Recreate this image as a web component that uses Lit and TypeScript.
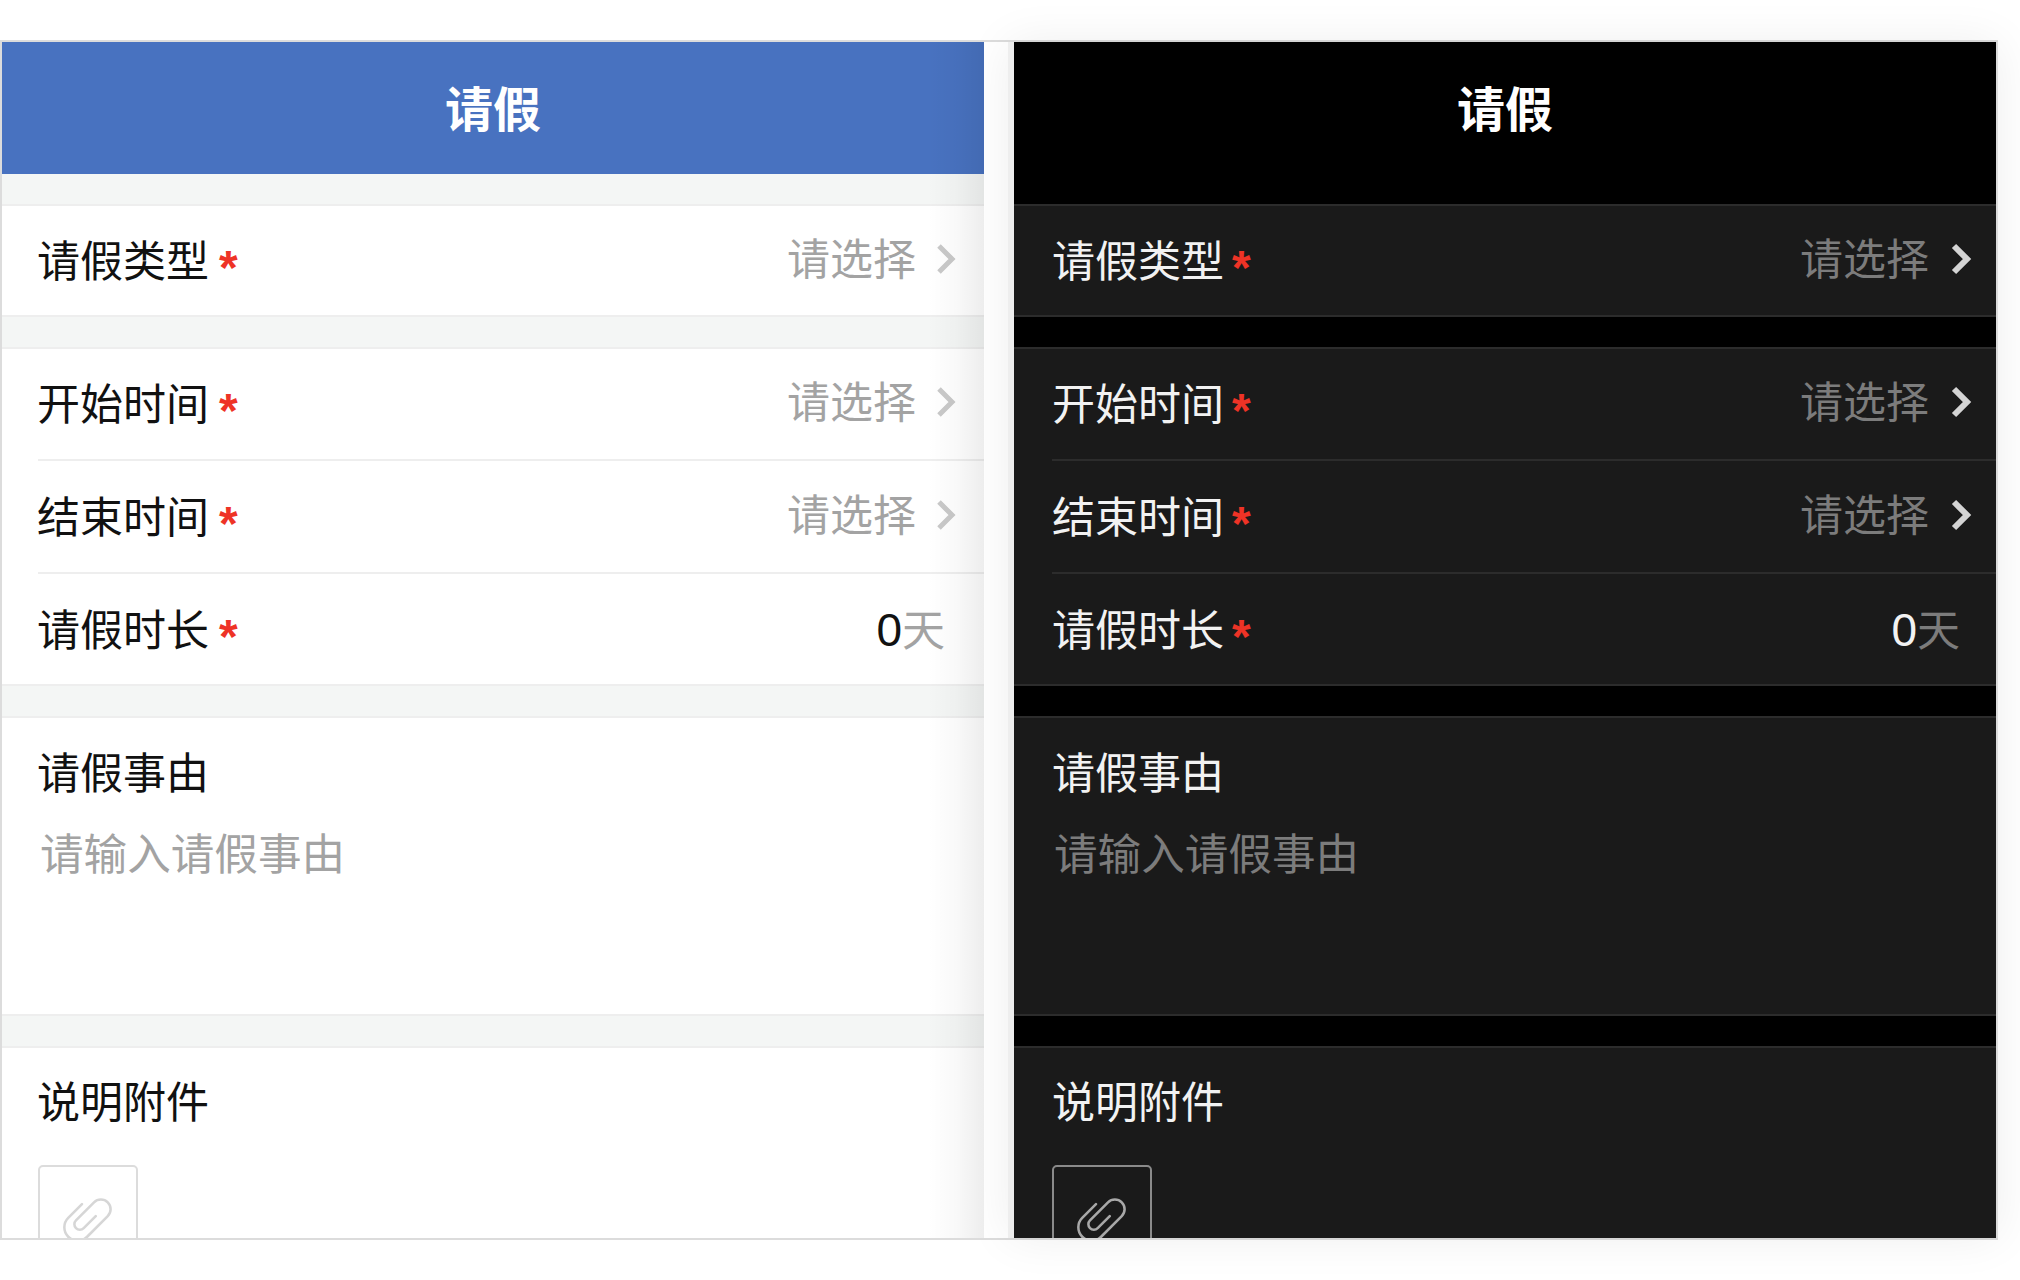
import {LitElement, html, css} from 'lit';
import {customElement, property} from 'lit/decorators.js';

const chevron = html`<svg class="chevron" width="22" height="34" viewBox="0 0 22 34"><path d="M4 4 L17 17 L4 30" fill="none" stroke="currentColor" stroke-width="var(--arrow-w)"/></svg>`;

const clip = html`<svg class="clip" width="68" height="68" viewBox="-28 -28 56 56"><path transform="rotate(-45)" d="M4 -11 L-12 -11 A11 11 0 0 0 -12 11 L12 11 A8 8 0 0 0 12 -5 L-9 -5 A4.5 4.5 0 0 0 -9 4 L5 4" fill="none" stroke="currentColor" stroke-width="2.1" stroke-linecap="round"/></svg>`;

@customElement('leave-form')
export class LeaveForm extends LitElement {
    @property({type: Boolean}) dark = false;

    static styles = css`
      :host {
        display: block;
        font-family: "Liberation Sans", "Noto Sans CJK SC", sans-serif;
      }

      .phone {
        position: relative;
        width: 982px;
        height: 1196px;
        overflow: hidden;
        background: #f4f6f5;
        --card: #fff;
        --line: #eeeeee;
        --text: #111;
        --muted: #a3a3a3;
        --arrow: #c9c9c9;
        --arrow-w: 5;
        --box: #dcdcdc;
        --clip: #d6d6d6;
        --zero: #111;
        --inset: 36px;
        --label-x: -1px;
        --pad-r: 31px;
        --arrow-gap: 19px;
        --star-gap: 10px;
      }

      .phone.dark {
        background: #000;
        --card: #1a1a1a;
        --line: #2c2c2c;
        --text: #f2f2f2;
        --muted: #7c7c7c;
        --arrow: #d4d4d4;
        --arrow-w: 6;
        --box: #8a8a8a;
        --clip: #a8a8a8;
        --zero: #f2f2f2;
        --inset: 38px;
        --label-x: 0px;
        --pad-r: 28px;
        --arrow-gap: 21px;
        --star-gap: 8px;
      }

      .header {
        height: 132px;
        padding-bottom: 5px;
        box-sizing: border-box;
        margin-bottom: 30px;
        background: #4872c0;
        color: #fff;
        font-size: 48px;
        font-weight: 700;
        display: flex;
        align-items: center;
        justify-content: center;
      }

      .dark .header {
        background: #000;
      }

      .section {
        background: var(--card);
        border-top: 2px solid var(--line);
        border-bottom: 2px solid var(--line);
        margin-bottom: 30px;
      }

      .row {
        height: 112px;
        margin-left: var(--inset);
        padding-right: var(--pad-r);
        padding-bottom: 6px;
        box-sizing: border-box;
        display: flex;
        align-items: center;
        font-size: 43px;
        color: var(--text);
        border-top: 2px solid var(--line);
      }

      .row:first-child {
        border-top: 0;
        height: 110px;
      }

      .row:nth-child(2) {
        height: 113px;
      }

      .row:nth-child(3) {
        padding-bottom: 4px;
      }

      .single .row:first-child {
        height: 109px;
      }

      .label {
        margin-left: var(--label-x);
      }

      .star {
        margin-left: var(--star-gap);
        color: #ee3326;
        font-size: 48px;
        font-weight: 700;
        line-height: 1;
        height: 28px;
      }

      .value {
        margin-left: auto;
        position: relative;
        top: -2px;
        color: var(--muted);
      }

      .chevron {
        margin-left: var(--arrow-gap);
        margin-right: -4px;
        margin-top: 2px;
        color: var(--arrow);
        display: block;
      }

      .days {
        margin-left: auto;
        margin-right: 8px;
        color: var(--muted);
      }

      .days b {
        font-weight: 400;
        font-size: 46px;
        color: var(--zero);
      }

      .reason {
        height: 296px;
        box-sizing: content-box;
      }

      .block-title {
        padding: 28px 0 0 calc(var(--inset) + var(--label-x));
        font-size: 43px;
        line-height: 56px;
        color: var(--text);
      }

      .placeholder {
        padding: 25px 0 0 calc(var(--inset) + 2px);
        font-size: 43.6px;
        line-height: 56px;
        color: var(--muted);
      }

      .attach {
        border-bottom: 0;
        margin: 0;
        height: 300px;
      }

      .attach .block-title {
        padding-top: 27px;
      }

      .upload {
        margin: 34px 0 0 var(--inset);
        width: 100px;
        height: 104px;
        box-sizing: border-box;
        border: 2px solid var(--box);
        border-radius: 5px;
        display: flex;
        align-items: center;
        justify-content: center;
        color: var(--clip);
      }

      .fade {
        position: absolute;
        top: 0;
        right: 0;
        bottom: 0;
        width: 56px;
        background: linear-gradient(to right, rgba(0,0,0,0), rgba(0,0,0,0.025) 50%, rgba(0,0,0,0.07));
      }
    `

    selectRow(label: string) {
        return html`
            <div class="row">
                <span class="label">${label}</span><span class="star">*</span>
                <span class="value">请选择</span>${chevron}
            </div>
        `
    }

    render() {
        return html`
            <div class="phone ${this.dark ? 'dark' : ''}">
                <div class="header">请假</div>
                <div class="section single">${this.selectRow('请假类型')}</div>
                <div class="section">
                    ${this.selectRow('开始时间')}
                    ${this.selectRow('结束时间')}
                    <div class="row">
                        <span class="label">请假时长</span><span class="star">*</span>
                        <span class="days"><b>0</b>天</span>
                    </div>
                </div>
                <div class="section reason">
                    <div class="block-title">请假事由</div>
                    <div class="placeholder">请输入请假事由</div>
                </div>
                <div class="section attach">
                    <div class="block-title">说明附件</div>
                    <div class="upload">${clip}</div>
                </div>
                ${this.dark ? '' : html`<div class="fade"></div>`}
            </div>
        `
    }
}

@customElement('app-root')
export class AppRoot extends LitElement {
    static styles = css`
      :host {
        display: block;
        height: 1280px;
        padding-top: 40px;
        box-sizing: border-box;
        background: #fff;
        overflow: hidden;
      }

      .stage {
        width: 1998px;
        height: 1200px;
        box-sizing: border-box;
        border: 2px solid #dcdcdc;
        border-right: 0;
        display: flex;
      }

      .gap {
        width: 24px;
        background: #fff;
      }

      .right {
        border-left: 6px solid #eeeeee;
        border-right: 2px solid #dcdcdc;
        box-shadow: 0 0 44px rgba(0,0,0,0.07);
      }
    `

    render() {
        return html`
            <div class="stage">
                <leave-form></leave-form>
                <div class="gap"></div>
                <div class="right"><leave-form dark></leave-form></div>
            </div>
        `
    }
}
